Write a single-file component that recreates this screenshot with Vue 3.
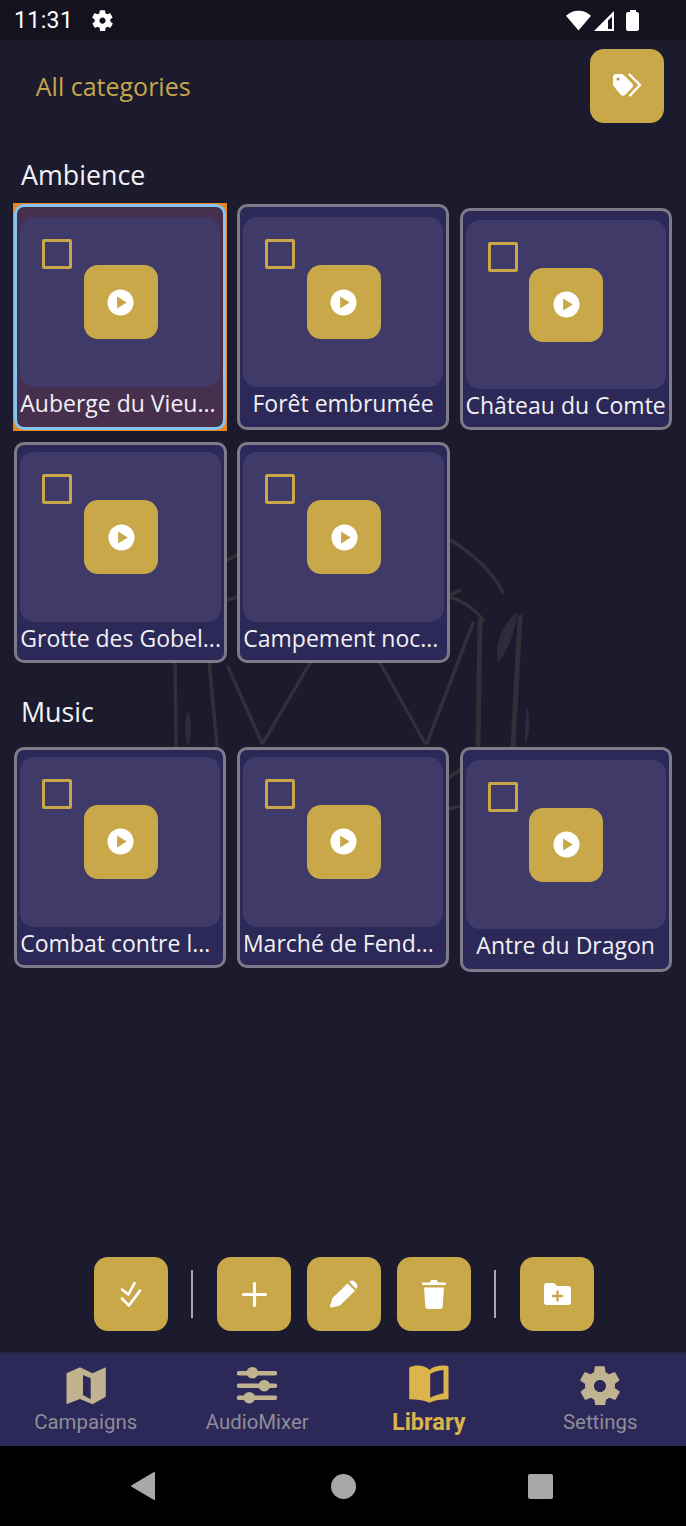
<template>
  <div class="phone">
    <div class="status">
      <span class="clock">11:31</span>
      <svg class="status-gear" viewBox="0 0 24 24"><path :d="gearPath" /></svg>
      <div class="status-right">
        <svg class="wifi" viewBox="0 0 24 20"><path d="M12 19.500 0 5.500C3.200 2.400 7.300.6 12 .6s8.800 1.800 12 4.900z" /></svg>
        <svg class="signal" viewBox="0 0 20 20"><path fill-rule="evenodd" d="M0 20 20 0v20zM14 9.500v8.500h4V5.500z" /></svg>
        <div class="battery"></div>
      </div>
    </div>

    <main class="content">
      <svg class="watermark" viewBox="0 40 686 1300" fill="none">
        <g stroke="#332e37" stroke-width="3.500" stroke-linecap="round">
          <path d="M175 640 176 746M207 640 217 746M228 667 262 743M310 663 263 743M380 663 425 743M473 623 427 743" />
          <path d="M450 540Q485 560 503 592M450 597Q470 603 483 620" />
          <path d="M445 780 460 770M445 810 460 806M227 560 237 555M227 600 237 597M440 600 460 590" />
          <path d="M480 620 478 746M520 617 513 746" stroke-width="5" />
        </g>
        <path d="M498 663C494 645 502 625 517 612 516 630 508 650 498 663ZM188 710C192 722 192 735 188 746 184 735 184 722 188 710ZM527 707C531 720 530 735 525 745 525 730 525 718 527 707Z" fill="#302b38" />
      </svg>

      <div class="top-row">
        <span class="filter">All categories</span>
        <button class="gold-btn">
          <svg class="tags" viewBox="0 0 30 24">
            <path d="M1 4C1 2.300 2.300 1 4 1h5.500c.9 0 1.700.4 2.300 1l8.200 8.200c1.300 1.300 1.300 3.300 0 4.600l-6.700 7c-1.300 1.300-3.300 1.300-4.600 0L2 13.500c-.6-.6-1-1.400-1-2.300z" fill="#fff" />
            <path d="M17.500 1.500 28 12 18 22.500" fill="none" stroke="#fff" stroke-width="2.400" stroke-linecap="round" stroke-linejoin="round" />
            <circle cx="6" cy="6" r="1.500" fill="#a89060" />
          </svg>
        </button>
      </div>

      <section v-for="group in groups" :key="group.name" class="group" :class="group.cls">
        <h2>{{ group.name }}</h2>
        <div v-for="(row, r) in group.rows" :key="r" class="row" :class="row.align">
          <div
            v-for="item in row.items"
            :key="item.title"
            class="card"
            :class="[item.size, { selected: item.selected }]"
          >
            <div class="panel">
              <span class="check"></span>
              <button class="gold-btn">
                <svg class="play" viewBox="0 0 28 28"><circle cx="14" cy="14" r="13.500" fill="#fff" /><path d="M10.500 7.800 20.500 14l-10 6.200z" fill="#c9a84a" /></svg>
              </button>
            </div>
            <div class="title" :class="{ clipped: item.title.endsWith('...') }">{{ item.title }}</div>
          </div>
        </div>
      </section>

      <div class="toolbar">
        <button class="gold-btn">
          <svg class="ic-check" viewBox="0 0 20 25" fill="none" stroke="#fff" stroke-width="2.600" stroke-linecap="round" stroke-linejoin="round"><path d="M1 7.500 7.400 12.500 13.500 1.200M1 16.500 7.800 23.600 19 8.600" /></svg>
        </button>
        <span class="divider"></span>
        <button class="gold-btn">
          <svg class="ic-plus" viewBox="0 0 24 24" fill="none" stroke="#fff" stroke-width="3" stroke-linecap="round"><path d="M12 1.500v21M1.500 12h21" /></svg>
        </button>
        <button class="gold-btn">
          <svg class="ic-pencil" viewBox="0 0 28 28" fill="#fff"><path d="M.5 27.500c-.5 0-.6-.5-.5-1L2.500 18 17.500 3.500l7.500 7.300L10 25.500 1.500 27.500z" /><path d="M19.300 1.700c1.600-1.500 4-1.500 5.500 0l1.500 1.500c1.500 1.600 1.500 4 0 5.500L26 9z" /></svg>
        </button>
        <button class="gold-btn">
          <svg class="ic-trash" viewBox="0 0 24 29" fill="#fff"><path d="M8.500 1.300C8.800.5 9.500 0 10.300 0h3.400c.8 0 1.500.5 1.800 1.300l.4 1.200h7c.6 0 1.100.5 1.100 1.200s-.5 1.300-1.100 1.300H1C.5 5 0 4.400 0 3.700s.5-1.200 1-1.200h7zM2 7.500h20l-1.300 19c-.1 1.400-1.200 2.500-2.600 2.500H5.900c-1.400 0-2.500-1.100-2.600-2.500z" /></svg>
        </button>
        <span class="divider"></span>
        <button class="gold-btn">
          <svg class="ic-folder" viewBox="0 0 27 22"><path d="M2.500 0h7.500l3 3h11.500c1.400 0 2.500 1.100 2.500 2.500v14c0 1.400-1.100 2.500-2.500 2.500H2.500C1.100 22 0 20.900 0 19.500v-17C0 1.100 1.100 0 2.500 0z" fill="#fff" /><path d="M13.500 8.500v9M9 13h9" stroke="#c9a84a" stroke-width="2.400" stroke-linecap="round" /></svg>
        </button>
      </div>
    </main>

    <nav class="tabs">
      <div v-for="tab in tabs" :key="tab.label" class="tab" :class="{ active: tab.active }">
        <svg viewBox="0 0 40 40" v-html="tab.icon"></svg>
        <span>{{ tab.label }}</span>
      </div>
    </nav>

    <div class="sysnav">
      <svg class="back" viewBox="0 0 24 28"><path d="M24 1v26c0 .8-.7 1.200-1.400.8L.6 14.800c-.7-.4-.7-1.200 0-1.600L22.600.2c.7-.4 1.400 0 1.400.8z" /></svg>
      <span class="home"></span>
      <span class="recent"></span>
    </div>
  </div>
</template>

<script setup>
const gearPath = 'M19.400 13c.1-.3.1-.7.1-1s0-.7-.1-1l2.100-1.600c.2-.2.2-.4.100-.6l-2-3.500c-.1-.2-.4-.3-.6-.2l-2.500 1c-.5-.4-1.100-.7-1.700-1l-.4-2.600c0-.3-.2-.4-.5-.4h-4c-.3 0-.5.200-.5.400l-.4 2.600c-.6.300-1.200.6-1.700 1l-2.500-1c-.2-.1-.5 0-.6.200l-2 3.500c-.1.200-.1.500.1.600L4.600 11c-.1.300-.1.700-.1 1s0 .7.1 1l-2.100 1.600c-.2.200-.2.400-.1.600l2 3.500c.1.200.4.300.6.200l2.500-1c.5.400 1.100.7 1.700 1l.4 2.600c0 .3.200.5.500.5h4c.3 0 .5-.2.500-.5l.4-2.600c.6-.3 1.200-.6 1.700-1l2.500 1c.2.100.5 0 .6-.2l2-3.500c.1-.2.100-.5-.1-.6zM12 15c-1.700 0-3-1.300-3-3s1.300-3 3-3 3 1.300 3 3-1.300 3-3 3z'

const groups = [
  {
    name: 'Ambience',
    cls: 'ambience',
    rows: [
      {
        align: 'end',
        items: [
          { title: 'Auberge du Vieu...', size: 'tall', selected: true },
          { title: 'Forêt embrumée', size: 'tall' },
          { title: 'Château du Comte', size: 'mid' }
        ]
      },
      {
        align: 'start',
        items: [{ title: 'Grotte des Gobel...' }, { title: 'Campement noc...' }]
      }
    ]
  },
  {
    name: 'Music',
    cls: 'music',
    rows: [
      {
        align: 'start',
        items: [
          { title: 'Combat contre l...' },
          { title: 'Marché de Fend...' },
          { title: 'Antre du Dragon', size: 'wide' }
        ]
      }
    ]
  }
]

const tabs = [
  {
    label: 'Campaigns',
    icon: '<path fill-rule="evenodd" d="M.5 8.300 14 2.300l12.500 6 13.300-6v29.400l-13.300 7.600L14 34 .5 39.300zM17 10v20l7.700 4.300v-21z"/>'
  },
  {
    label: 'AudioMixer',
    icon: '<g fill="none" stroke-width="4.500" stroke-linecap="round" style="stroke:var(--icon)"><path d="M2 8.300h36M2 20.700h36M2 32.700h36"/></g><circle cx="15.300" cy="7.700" r="5.800"/><circle cx="27.300" cy="20.700" r="5.800"/><circle cx="12.300" cy="32.700" r="5.800"/>'
  },
  {
    label: 'Library',
    active: true,
    icon: '<path fill-rule="evenodd" d="M.2 3C.2 2 5 .5 9 .5c4.500 0 9 1.500 11.500 4.500C23.500 2 28 .5 36 .5c2 0 3.500.5 3.500 1.500v32.300c-7 0-13.500 1-19 3.400-5.500-2.400-13.300-3.400-20.300-3.400zM21.200 9v23.700c4-2 9-3.800 13.300-4.400V5c-5 .5-9.500 1.700-13.300 4z"/>'
  },
  {
    label: 'Settings',
    icon: '<path fill-rule="evenodd" transform="translate(-4 -3) scale(2)" d="M19.400 13c.1-.3.1-.7.1-1s0-.7-.1-1l2.100-1.600c.2-.2.2-.4.100-.6l-2-3.500c-.1-.2-.4-.3-.6-.2l-2.500 1c-.5-.4-1.100-.7-1.700-1l-.4-2.600c0-.3-.2-.4-.5-.4h-4c-.3 0-.5.200-.5.400l-.4 2.600c-.6.300-1.200.6-1.700 1l-2.500-1c-.2-.1-.5 0-.6.200l-2 3.500c-.1.200-.1.500.1.600L4.600 11c-.1.300-.1.700-.1 1s0 .7.1 1l-2.100 1.600c-.2.200-.2.400-.1.600l2 3.500c.1.200.4.300.6.200l2.500-1c.5.400 1.100.7 1.700 1l.4 2.600c0 .3.200.5.500.5h4c.3 0 .5-.2.500-.5l.4-2.600c.6-.3 1.200-.6 1.700-1l2.500 1c.2.100.5 0 .6-.2l2-3.500c.1-.2.100-.5-.1-.6zM12 15c-1.700 0-3-1.300-3-3s1.300-3 3-3 3 1.300 3 3-1.300 3-3 3z"/>'
  }
]
</script>

<style>
html,
body {
  margin: 0;
  background: #1c1b2e;
}
</style>

<style scoped>
.phone {
  width: 686px;
  height: 1526px;
  display: flex;
  flex-direction: column;
  background: #1c1b2e;
  overflow: hidden;
  font-family: 'Open Sans', sans-serif;
}

.status {
  height: 40px;
  flex: none;
  display: flex;
  align-items: center;
  padding: 0 47px 0 14px;
  background: #15121f;
  color: #fff;
}

.clock {
  font-family: Roboto, sans-serif;
  font-size: 23px;
  letter-spacing: 0.4px;
}

.status-gear {
  width: 25px;
  height: 25px;
  margin-left: 17px;
  fill: #fff;
}

.status-right {
  margin-left: auto;
  display: flex;
  align-items: center;
  fill: #fff;
}

.wifi {
  width: 25px;
  height: 21px;
}

.signal {
  width: 20px;
  height: 20px;
  margin: 1px 0 0 3px;
}

.battery {
  position: relative;
  width: 13px;
  height: 19px;
  margin: 3px 0 0 12px;
  background: #fff;
  border-radius: 2px;
}

.battery::before {
  content: '';
  position: absolute;
  left: 3.500px;
  top: -2px;
  width: 6px;
  height: 3px;
  background: #fff;
}

.content {
  position: relative;
  flex: 1;
  display: flex;
  flex-direction: column;
  padding: 0 14.300px;
  min-height: 0;
}

.watermark {
  position: absolute;
  left: 0;
  top: 0;
  width: 686px;
  height: 1300px;
}

.top-row {
  position: relative;
  display: flex;
  align-items: center;
  justify-content: space-between;
  height: 74px;
  margin: 9px 7.500px 0 21.500px;
}

.filter {
  font-size: 25px;
  color: #c5a64d;
}

.gold-btn {
  width: 74px;
  height: 74px;
  flex: none;
  padding: 0;
  border: 0;
  border-radius: 14px;
  background: #c9a84a;
  display: flex;
  align-items: center;
  justify-content: center;
}

.tags {
  width: 30px;
  height: 24px;
  margin-top: -2px;
}

.group {
  position: relative;
}

.group h2 {
  margin: 0 0 0 6.700px;
  font-size: 26.800px;
  font-weight: 500;
  line-height: 36px;
  color: #f2f1f4;
}

.ambience {
  margin-top: 34px;
}

.ambience h2 {
  margin-bottom: 11.300px;
}

.music {
  margin-top: 31.700px;
}

.music h2 {
  margin-bottom: 16.700px;
}

.row {
  display: flex;
  gap: 10.500px;
  isolation: isolate;
}

.row + .row {
  margin-top: 12px;
}

.row.end {
  align-items: flex-end;
}

.row.start {
  align-items: flex-start;
}

.card {
  box-sizing: border-box;
  width: 212.500px;
  height: 220.500px;
  padding: 7px 3px 0;
  border: 3px solid #7d7b87;
  border-radius: 10px;
  background: #2c2857;
}

.card.tall {
  height: 226px;
  padding-top: 10px;
}

.card.mid {
  height: 222px;
  padding-top: 8.700px;
}

.card.wide {
  height: 225px;
  padding-top: 9.800px;
}

.card.selected {
  position: relative;
  background: #46304e;
  border-color: #84c4ee;
}

.card.selected::before {
  content: '';
  position: absolute;
  inset: -4px;
  z-index: -1;
  background: #e8851f;
}

.panel {
  position: relative;
  height: 169.500px;
  border-radius: 14px;
  background: #3f3a68;
  display: flex;
  align-items: center;
  justify-content: center;
}

.panel .gold-btn {
  margin-left: 1px;
}

.check {
  position: absolute;
  left: 22px;
  top: 22px;
  box-sizing: border-box;
  width: 30px;
  height: 30px;
  border: 3px solid #c9a84a;
  border-radius: 2px;
}

.play {
  width: 27px;
  height: 27px;
}

.title {
  margin: 0 -3px;
  font-size: 23px;
  line-height: 33px;
  text-align: center;
  color: #f1f0f4;
  white-space: nowrap;
}

.title.clipped {
  text-align: left;
  padding-left: 3px;
}

.toolbar {
  position: relative;
  margin-top: auto;
  margin-bottom: 21px;
  display: flex;
  align-items: center;
  padding-left: 80px;
  gap: 16px;
}

.ic-check {
  width: 20px;
  height: 25px;
  overflow: visible;
}

.ic-plus {
  width: 25px;
  height: 25px;
}

.ic-pencil {
  width: 28px;
  height: 28px;
}

.ic-trash {
  width: 24px;
  height: 29px;
}

.ic-folder {
  width: 27px;
  height: 22px;
}

.divider {
  width: 2px;
  height: 48px;
  margin: 0 8px 0 7px;
  background: #a9a9b2;
}

.tabs {
  height: 94px;
  flex: none;
  display: flex;
  background: #2c2857;
  border-top: 2px solid #252342;
  box-sizing: border-box;
  --icon: #c0b490;
}

.tab {
  flex: 1;
  display: flex;
  flex-direction: column;
  align-items: center;
  font-family: Roboto, sans-serif;
  font-size: 20.400px;
  color: #8f8c98;
  fill: var(--icon);
}

.tab svg {
  width: 40px;
  height: 40px;
  margin-top: 11px;
}

.tab span {
  margin-top: 4px;
  line-height: 26px;
}

.tab.active {
  --icon: #dcb44c;
  color: #d9b34c;
  font-weight: 700;
  font-size: 23.500px;
}

.sysnav {
  height: 80px;
  flex: none;
  background: #000;
  display: flex;
  align-items: center;
}

.back {
  width: 24px;
  height: 28px;
  margin-left: 131px;
  fill: #a8a8a8;
}

.home {
  width: 25px;
  height: 25px;
  margin-left: 176px;
  border-radius: 50%;
  background: #a8a8a8;
}

.recent {
  width: 25px;
  height: 25px;
  margin-left: 172px;
  border-radius: 2px;
  background: #a8a8a8;
}
</style>
